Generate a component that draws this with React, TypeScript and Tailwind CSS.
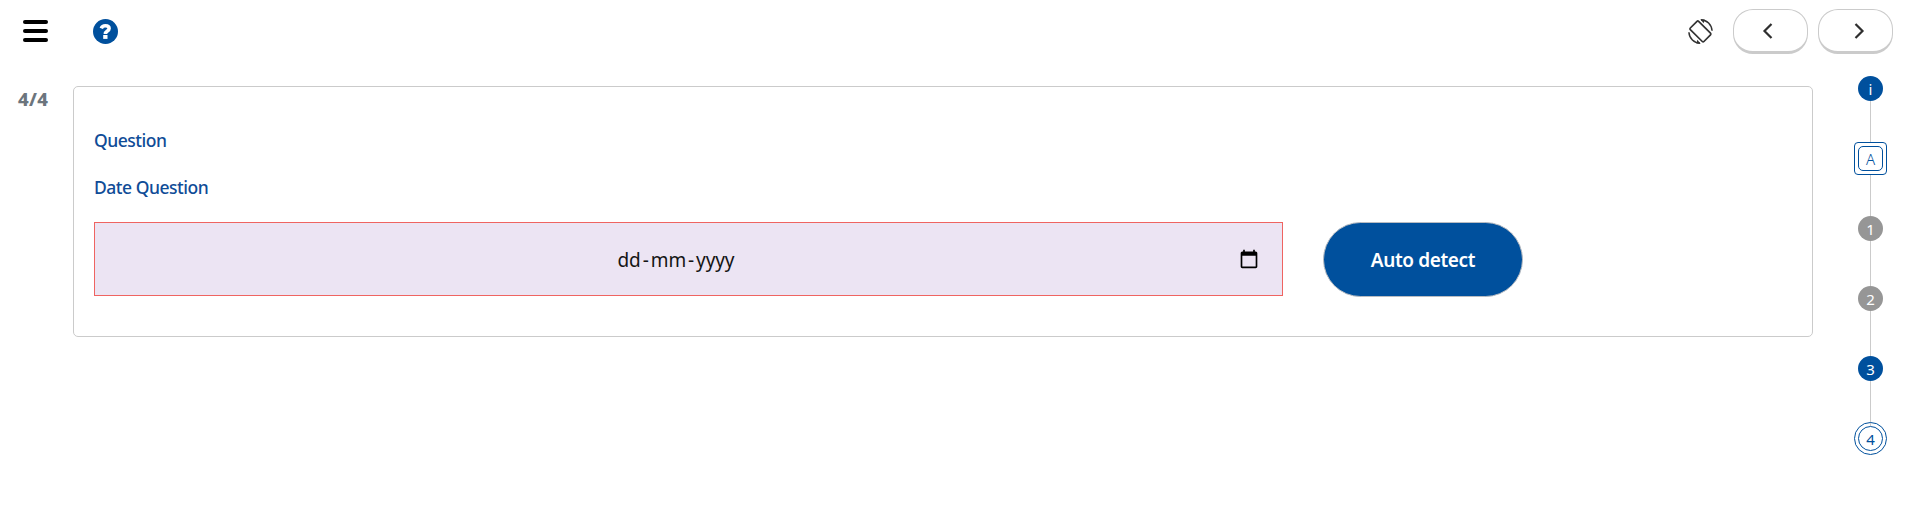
const steps = [
  { label: "i", kind: "blue" },
  { label: "A", kind: "square" },
  { label: "1", kind: "gray" },
  { label: "2", kind: "gray" },
  { label: "3", kind: "blue" },
  { label: "4", kind: "ring" },
];

function Marker({ label, kind }: { label: string; kind: string }) {
  if (kind === "square")
    return (
      <div className="flex size-[33px] items-center justify-center rounded-[4px] border border-[#00509d] bg-white">
        <div className="flex size-[25px] items-center justify-center rounded-[5px] border border-[#00509d] pt-px font-light text-[#00509d]">{label}</div>
      </div>
    );
  if (kind === "ring")
    return (
      <div className="flex size-[33px] items-center justify-center rounded-full border border-[#00509d]">
        <div className="flex size-[25px] items-center justify-center rounded-full border border-[#00509d] bg-white pt-px text-[#00509d]">{label}</div>
      </div>
    );
  return (
    <div className={`flex size-[25px] items-center justify-center rounded-full pt-px text-white ${kind === "gray" ? "bg-[#969696]" : "bg-[#00509d]"}`}>
      {label}
    </div>
  );
}

function NavButton({ label, d }: { label: string; d: string }) {
  return (
    <button aria-label={label} className="flex h-[45px] w-[75px] items-center justify-center rounded-[20px] border border-b-[3px] border-[#cbcbcb] bg-white">
      <svg className="h-[20px] w-[25px]" viewBox="0 0 25 20" fill="none" stroke="#2e2e2e" strokeWidth="2.200">
        <path d={d} />
      </svg>
    </button>
  );
}

export default function App() {
  return (
    <div className="flex h-[505px] w-full flex-col bg-white font-['Noto_Sans',sans-serif]">
      <header className="flex h-[63px] items-center justify-between pr-5 pl-[23px]">
        <div className="flex items-center gap-[45px]">
          <button aria-label="Menu" className="mb-px flex w-[25px] flex-col gap-[5px]">
            <span className="h-1 rounded-full bg-black" />
            <span className="h-1 rounded-full bg-black" />
            <span className="h-1 rounded-full bg-black" />
          </button>
          <svg className="size-[25px]" viewBox="0 0 25 25" aria-label="Help">
            <circle cx="12.5" cy="12.5" r="12.500" fill="#00509d" />
            <path d="M8.300 9.300C9 7.500 10.500 6.800 12.400 6.800c2.200 0 3.700 1 3.700 2.700 0 2.600-3.700 2.400-3.700 5.400" fill="none" stroke="#fff" strokeWidth="3.600" />
            <rect x="10.200" y="16" width="4.300" height="3.900" fill="#fff" />
          </svg>
        </div>
        <div className="flex items-center">
          <svg className="mr-5 size-[25px]" viewBox="0 0 25 25" fill="none" stroke="#333" strokeWidth="1.700" aria-label="Rotate screen">
            <path d="M2.300 9 9 2.300q.8-.8 1.600 0L22.500 14.200q.8.8 0 1.600L15.900 22.500q-.8.8-1.600 0L2.300 10.600q-.8-.8 0-1.600z" />
            <path d="M13 .9C19 .9 23.600 5.500 24.100 11.800M12 24.100C6 24.100 1.400 19.500.9 13.200" strokeWidth="1.500" />
            <path d="M12.300.1 16.800.6 15.600 4.200zM12.700 24.900 8.200 24.400 9.400 20.800z" fill="#333" stroke="none" />
          </svg>
          <div className="flex gap-2.5">
            <NavButton label="Previous" d="M13.500 3 6.500 10l7 7" />
            <NavButton label="Next" d="M12.500 3l7 7-7 7" />
          </div>
        </div>
      </header>
      <div className="flex">
        <div className="w-[73px] shrink-0 pt-[26px] pl-[18px] text-[18.500px] leading-[20px] font-extrabold tracking-[0.300px] text-[#6c757d]">4/4</div>
        <main className="mt-[23px] h-[251px] w-[1740px] shrink-0 rounded-[5px] border border-[#cbcbcb] px-5 pt-[41px]">
          <p className="text-[17.500px] leading-[25px] font-medium tracking-[-0.480px] text-[#0f4c97]">Question</p>
          <p className="mt-[22px] text-[17.500px] leading-[25px] font-medium tracking-[-0.480px] text-[#0f4c97]">Date Question</p>
          <div className="mt-[22px] flex gap-10">
            <div className="flex h-[74px] w-[1189px] items-center border border-[#ef6461] bg-[#ece4f3] pr-[23px] text-[19px] text-[#141414]">
              <span className="flex-1 pt-[2px] pl-[18px] text-center tracking-[-0.100px]">
                dd<span className="px-[2px]">-</span>mm<span className="px-[2px]">-</span>yyyy
              </span>
              <svg className="mb-px size-[20px]" viewBox="0 0 24 24" fill="#000">
                <path d="M20 3h-1V1h-2v2H7V1H5v2H4c-1.100 0-2 .9-2 2v16c0 1.100.9 2 2 2h16c1.100 0 2-.9 2-2V5c0-1.100-.9-2-2-2zm0 18H4V8h16v13z" />
              </svg>
            </div>
            <button className="h-[75px] w-[200px] rounded-full border border-[#b8bcc2] bg-[#00509d] pt-[2px] text-[19px] font-semibold tracking-[-0.370px] text-white">
              Auto detect
            </button>
          </div>
        </main>
        <nav className="flex w-[100px] shrink-0 flex-col items-start pt-[9px] pl-[41px] text-[15px] leading-none">
          {steps.map((s, i) => (
            <div key={s.label} className="flex h-[70px] w-[33px] flex-col items-center">
              <div className="relative z-10 flex h-[33px] shrink-0 items-center">
                <Marker label={s.label} kind={s.kind} />
              </div>
              {i < steps.length - 1 && <div className="-my-1 h-[45px] w-px shrink-0 bg-[#cbcbcb]" />}
            </div>
          ))}
        </nav>
      </div>
    </div>
  );
}
